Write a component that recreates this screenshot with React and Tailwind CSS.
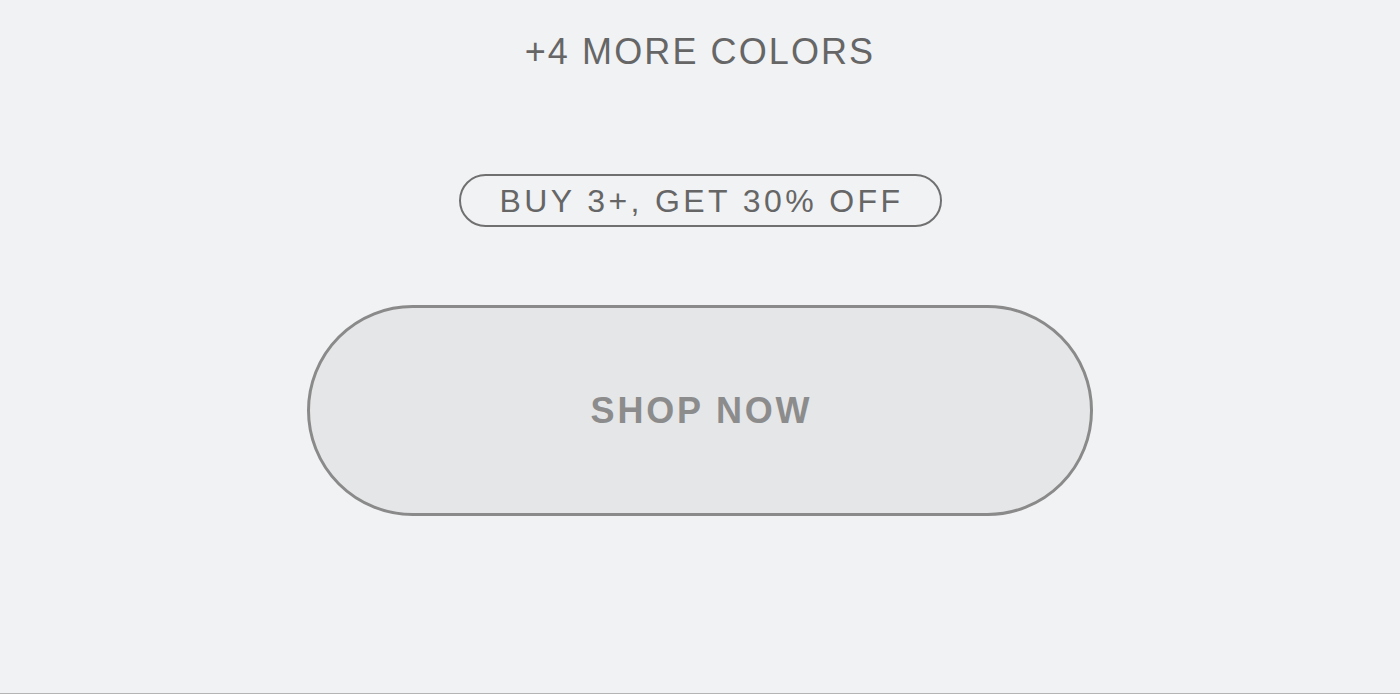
export default function App() {
  return (
    <div
      className="min-h-[694px] bg-[#f1f2f4] border-b border-[#b4b4b4] flex flex-col items-center"
      style={{ fontFamily: '"Liberation Sans", Arial, sans-serif' }}
    >
      <p className="mt-[32px] text-[36px] leading-[40px] tracking-[2.1px] text-[#666666]">
        +4 MORE COLORS
      </p>

      <div className="mt-[102px] w-[483px] h-[53px] rounded-full border-2 border-[#707070] flex items-center justify-center">
        <span className="text-[32px] leading-none tracking-[3.4px] text-[#666666] pl-[3px]">
          BUY 3+, GET 30% OFF
        </span>
      </div>

      <button className="mt-[78px] w-[786px] h-[211px] rounded-full border-[3px] border-[#8a8a8a] bg-[#e5e6e8] flex items-center justify-center">
        <span className="text-[36px] leading-none font-bold tracking-[2.8px] text-[#8c8c8c] pl-[3px]">
          SHOP NOW
        </span>
      </button>
    </div>
  );
}
